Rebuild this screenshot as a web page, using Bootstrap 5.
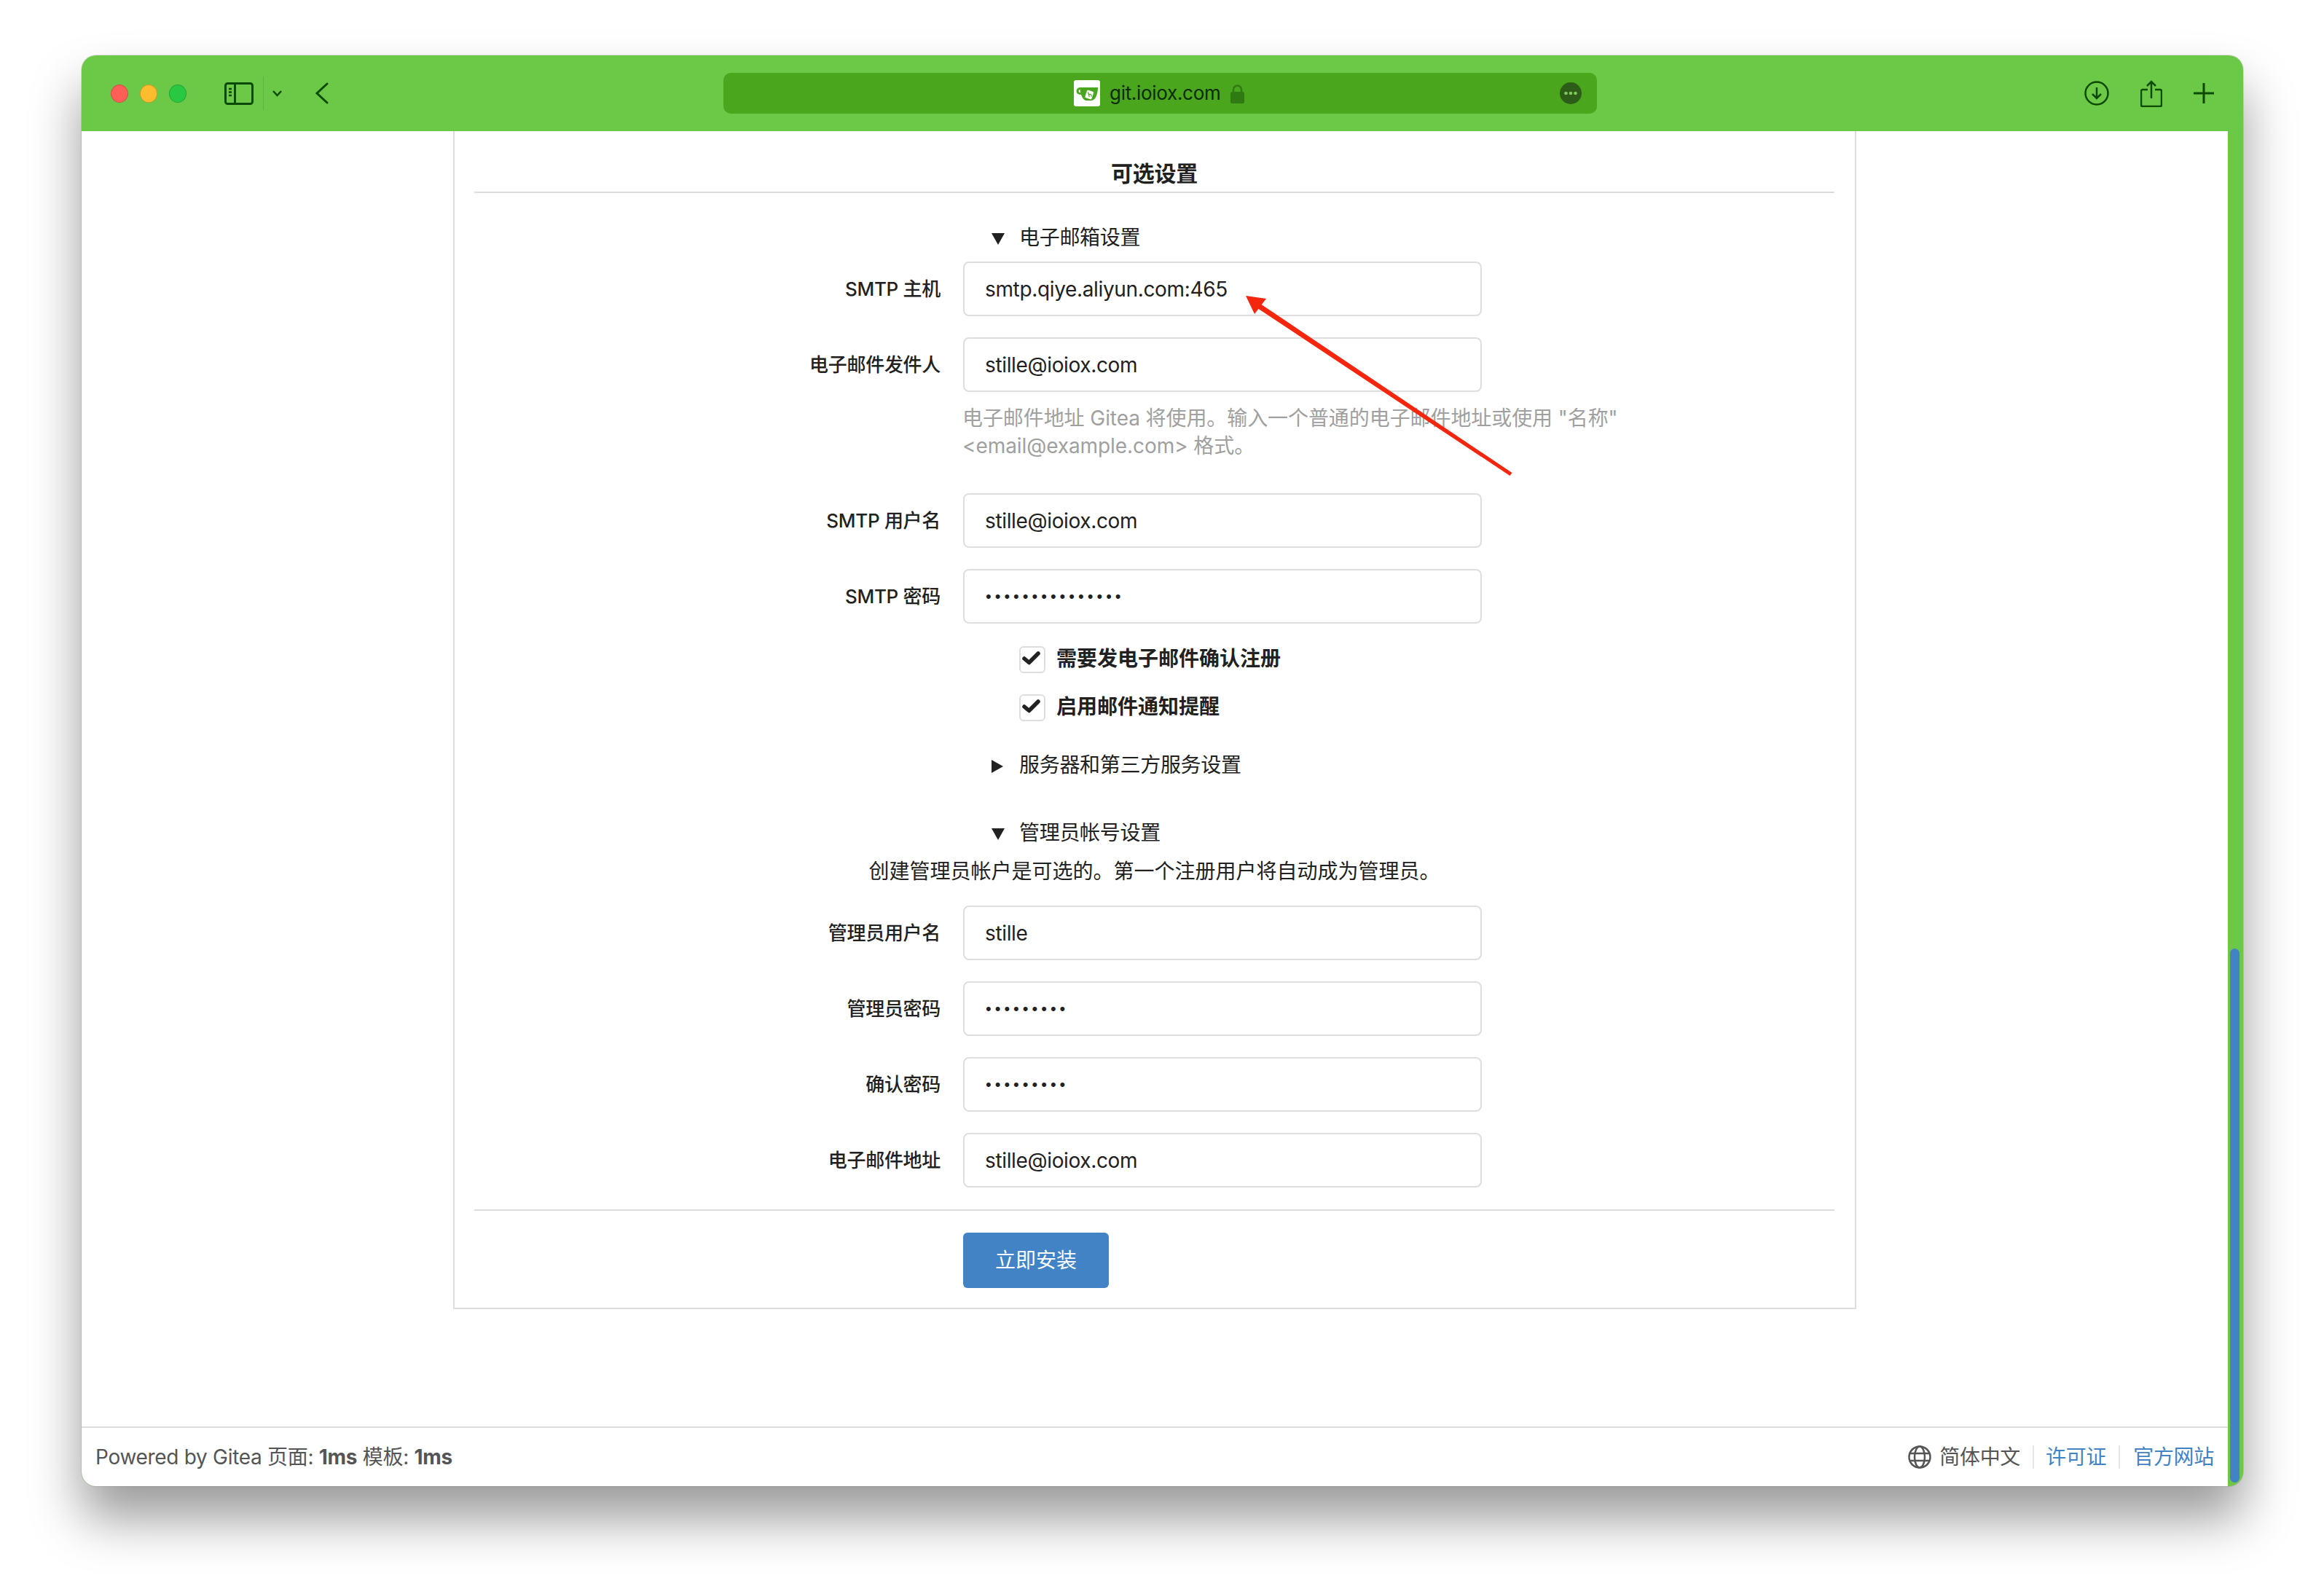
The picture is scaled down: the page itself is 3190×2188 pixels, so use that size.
<!DOCTYPE html>
<html lang="zh-CN">
<head>
    <meta charset="UTF-8">
    <title>Gitea 安装</title>
    <link href="https://cdn.jsdelivr.net/npm/bootstrap@5.3.2/dist/css/bootstrap.min.css" rel="stylesheet">
    <style>
        body { background: #fff; font-family: Inter, "Noto Sans CJK SC", sans-serif; font-size: 28px; line-height: 40px; letter-spacing: -.3px; color: #212121; }
        .page-wrap { padding: 76px 111px 148px 112px; }
        .app-window { height: 1964px; border-radius: 20px; background: #6cc947; box-shadow: 0 44px 70px rgba(0,0,0,.4), 0 0 0 1px rgba(0,0,0,.1); overflow: hidden; }

        /* safari toolbar */
        .toolbar { height: 104px; padding-left: 40px; padding-right: 40px; color: #0b4a00; }
        .dot { width: 24px; height: 25px; border-radius: 50%; border: 1px solid rgba(0,0,0,.18); margin-right: 16px; }
        .dot-red { background: #ff5f57; }
        .dot-yellow { background: #febc2e; }
        .dot-green { background: #28c840; margin-right: 0; }
        .tb-sidebar { margin-left: 52px; }
        .tb-sep { width: 1px; height: 46px; background: rgba(0,0,0,.1); margin: 0 12px 0 13px; }
        .tb-chev { margin-right: 45px; }
        .url-bar { position: absolute; left: 881px; top: 24px; width: 1199px; height: 56px; background: #4aa61c; border-radius: 10px; }
        .url-inner { padding-left: 481px; padding-right: 21px; }
        .url-text { font-size: 26px; line-height: 56px; color: #0c2b04; margin: 0 14px 0 13px; }
        .tb-right { gap: 43px; }

        /* page */
        .page-pane { background: #fff; min-height: 0; }
        .page-main { overflow: hidden; }
        .install-box { width: 1926px; height: 1617px; margin: 0 auto; padding: 0 28px 0 27px; border: 2px solid #ddd; border-top: 0; }
        .box-title { font-size: 30px; font-weight: 700; line-height: 40px; text-align: center; margin: 0; padding: 38px 0 5px; border-bottom: 2px solid #ddd; }
        .fold-head { list-style: none; cursor: pointer; margin-left: 710px; display: flex; align-items: center; line-height: 40px; }
        .fold-head::-webkit-details-marker { display: none; }
        .fold-arrow { width: 38px; flex: none; }
        .fold-mail { margin-top: 41px; }
        .fold-mail .fold-head { margin-bottom: 13px; }
        .fold-server { margin-top: 40px; }
        .fold-admin { margin-top: 53px; }
        .admin-note { text-align: center; margin: 13px 0 27px; line-height: 40px; letter-spacing: 0; }
        .field-row { display: flex; align-items: center; gap: 31px; margin-bottom: 29px; }
        .field-row label { width: 640px; text-align: right; font-size: 26px; font-weight: 500; line-height: 40px; margin: 0; color: #212121; }
        .field-input.form-control { width: 712px; height: 75px; padding: 0 28px; font-size: 28px; line-height: 40px; letter-spacing: -.35px; color: #212121; border: 2px solid #dedede; border-radius: 8px; box-shadow: none; }
        .field-input.form-control[type=password] { font-family: "Liberation Sans", sans-serif; font-size: 22px; letter-spacing: 5px; padding-left: 29px; }
        .field-hint { margin: -12px 0 46px 670px; width: 920px; font-size: 28px; line-height: 38px; letter-spacing: -.08px; color: #a0a0a0; }
        .check-row { display: flex; align-items: center; margin: 31px 0 0 748px; height: 37px; }
        .check-row + .check-row { margin-top: 29px; }
        .check-box.form-check-input { width: 36px; height: 37px; margin: 0 15px 0 0; border: 2px solid #dedede; border-radius: 6px; background-color: #fff; background-size: 36px 37px; }
        .check-box.form-check-input:checked { background-color: #fff; border-color: #dedede; background-image: url("data:image/svg+xml,%3csvg xmlns='http://www.w3.org/2000/svg' viewBox='0 0 36 37'%3e%3cpath fill='none' stroke='%23222' stroke-width='5.500' stroke-linecap='round' stroke-linejoin='round' d='M7 17l6.500 5.500L26 10'/%3e%3c/svg%3e"); }
        .check-row label { font-weight: 700; margin: -3px 0 0; letter-spacing: 0; }
        .form-end { margin-top: 30px; border-top: 2px solid #ddd; padding: 30px 0 0 671px; }
        .install-btn.btn { width: 200px; height: 76px; padding: 0; font-size: 28px; line-height: 40px; background: #4183c4; border: 0; border-radius: 6px; color: #fff; }

        /* footer */
        .page-foot { height: 82px; border-top: 2px solid #ddd; padding: 0 19px; color: #555; }
        .page-foot a { color: #4183c4; text-decoration: none; }
        .foot-links > * { padding: 0 17px 0 16px; border-left: 2px solid #e5e5e5; line-height: 32px; }
        .foot-links > *:first-child { border-left: 0; padding-left: 0; }
        .foot-links > *:last-child { padding: 0 0 0 18px; }
        .foot-links svg { margin-right: 11px; vertical-align: -6px; }

        /* scroll strip */
        .scroll-strip { width: 21px; padding: 1122px 5px 5px 3px; }
        .scroll-thumb { height: 733px; background: #4183c4; border-radius: 7px; }

        .arrow-layer { position: absolute; left: 0; top: 0; pointer-events: none; }
    </style>
</head>
<body>
    <div class="page-wrap">
        <div class="app-window d-flex flex-column position-relative">
            <div class="toolbar d-flex align-items-center flex-shrink-0">
                <span class="dot dot-red"></span>
                <span class="dot dot-yellow"></span>
                <span class="dot dot-green"></span>
                <svg class="tb-sidebar" width="40" height="31" viewBox="0 0 40 31" fill="none" stroke="currentColor" stroke-width="3">
                    <rect x="1.5" y="1.5" width="37" height="28" rx="3"/>
                    <path d="M14.5 1.5v28"/>
                    <path d="M6 9h4M6 13.500h4M6 18h4" stroke-width="2.500"/>
                </svg>
                <span class="tb-sep"></span>
                <svg class="tb-chev" width="13" height="9" viewBox="0 0 13 9" fill="none" stroke="currentColor" stroke-width="2.500"><path d="M1 1l5.500 6L12 1"/></svg>
                <svg width="19" height="30" viewBox="0 0 19 30" fill="none" stroke="currentColor" stroke-width="3" stroke-linecap="round"><path d="M17 2L3 15l14 13"/></svg>

                <div class="url-bar">
                    <div class="url-inner d-flex align-items-center h-100">
                        <svg width="36" height="36" viewBox="0 0 36 36">
                            <rect width="36" height="36" rx="3" fill="#fff"/>
                            <ellipse cx="9" cy="15" rx="5.500" ry="5" fill="#4aa61c"/>
                            <ellipse cx="9" cy="15" rx="2.500" ry="2.300" fill="#fff"/>
                            <path d="M8 10h25c0 8-3 18-9 18h-7c-5 0-8-9-9-18z" fill="#4aa61c"/>
                            <rect x="16.500" y="14.500" width="9.500" height="11" rx="1.500" fill="#fff" transform="rotate(18 21 20)"/>
                            <path d="M19.500 16.500l1.800 6.500m-.5-3.200c1.800-.8 2.800-.5 3.200 1l.5 1.800" fill="none" stroke="#4aa61c" stroke-width="1.200"/>
                        </svg>
                        <span class="url-text">git.ioiox.com</span>
                        <svg width="19" height="27" viewBox="0 0 19 27">
                            <path d="M4 12V8a5.500 5.500 0 0 1 11 0v4" fill="none" stroke="#2f7a12" stroke-width="2.500"/>
                            <rect y="11" width="19" height="16" rx="2.500" fill="#2f7a12"/>
                        </svg>
                        <svg class="ms-auto" width="30" height="30" viewBox="0 0 30 30">
                            <circle cx="15" cy="15" r="15" fill="#2c5c17"/>
                            <circle cx="8.500" cy="15" r="2.300" fill="#7fc860"/><circle cx="15" cy="15" r="2.300" fill="#7fc860"/><circle cx="21.500" cy="15" r="2.300" fill="#7fc860"/>
                        </svg>
                    </div>
                </div>

                <div class="tb-right d-flex align-items-center ms-auto">
                    <svg width="34" height="34" viewBox="0 0 34 34" fill="none" stroke="currentColor" stroke-width="2.500">
                        <circle cx="17" cy="17" r="15.500"/>
                        <path d="M17 9v15M11 18l6 6 6-6"/>
                    </svg>
                    <svg width="30" height="37" viewBox="0 0 30 37" fill="none" stroke="currentColor" stroke-width="2.500">
                        <path d="M10 13H3a2 2 0 0 0-2 2v19a2 2 0 0 0 2 2h24a2 2 0 0 0 2-2V15a2 2 0 0 0-2-2h-7"/>
                        <path d="M15 25V2M9 8l6-6 6 6"/>
                    </svg>
                    <svg width="28" height="28" viewBox="0 0 28 28" fill="none" stroke="currentColor" stroke-width="3"><path d="M14 0v28M0 14h28"/></svg>
                </div>
            </div>

            <div class="d-flex flex-grow-1 page-pane-row">
                <div class="page-pane flex-grow-1 d-flex flex-column">
                    <div class="page-main flex-grow-1">
                        <form class="install-box">
                            <h4 class="box-title">可选设置</h4>

                            <details class="fold-mail" open>
                                <summary class="fold-head">
                                    <span class="fold-arrow"><svg width="18" height="16" viewBox="0 0 18 16"><path d="M0 0h18L9 16z" fill="#212121"/></svg></span>
                                    电子邮箱设置
                                </summary>
                                <div class="field-row">
                                    <label for="smtpHost">SMTP 主机</label>
                                    <input id="smtpHost" class="form-control field-input" type="text" value="smtp.qiye.aliyun.com:465">
                                </div>
                                <div class="field-row">
                                    <label for="smtpFrom">电子邮件发件人</label>
                                    <input id="smtpFrom" class="form-control field-input" type="text" value="stille@ioiox.com">
                                </div>
                                <div class="field-hint">电子邮件地址 Gitea 将使用。输入一个普通的电子邮件地址或使用 "名称" &lt;email@example.com&gt; 格式。</div>
                                <div class="field-row">
                                    <label for="smtpUser">SMTP 用户名</label>
                                    <input id="smtpUser" class="form-control field-input" type="text" value="stille@ioiox.com">
                                </div>
                                <div class="field-row mb-0">
                                    <label for="smtpPass">SMTP 密码</label>
                                    <input id="smtpPass" class="form-control field-input" type="password" value="123456789012345">
                                </div>
                                <div class="check-row">
                                    <input id="regConfirm" class="form-check-input check-box" type="checkbox" checked>
                                    <label for="regConfirm">需要发电子邮件确认注册</label>
                                </div>
                                <div class="check-row">
                                    <input id="mailNotify" class="form-check-input check-box" type="checkbox" checked>
                                    <label for="mailNotify">启用邮件通知提醒</label>
                                </div>
                            </details>

                            <details class="fold-server">
                                <summary class="fold-head">
                                    <span class="fold-arrow"><svg width="16" height="18" viewBox="0 0 16 18"><path d="M0 0l16 9L0 18z" fill="#212121"/></svg></span>
                                    服务器和第三方服务设置
                                </summary>
                            </details>

                            <details class="fold-admin" open>
                                <summary class="fold-head">
                                    <span class="fold-arrow"><svg width="18" height="16" viewBox="0 0 18 16"><path d="M0 0h18L9 16z" fill="#212121"/></svg></span>
                                    管理员帐号设置
                                </summary>
                                <p class="admin-note">创建管理员帐户是可选的。第一个注册用户将自动成为管理员。</p>
                                <div class="field-row">
                                    <label for="adminName">管理员用户名</label>
                                    <input id="adminName" class="form-control field-input" type="text" value="stille">
                                </div>
                                <div class="field-row">
                                    <label for="adminPass">管理员密码</label>
                                    <input id="adminPass" class="form-control field-input" type="password" value="123456789">
                                </div>
                                <div class="field-row">
                                    <label for="adminConfirm">确认密码</label>
                                    <input id="adminConfirm" class="form-control field-input" type="password" value="123456789">
                                </div>
                                <div class="field-row mb-0">
                                    <label for="adminEmail">电子邮件地址</label>
                                    <input id="adminEmail" class="form-control field-input" type="text" value="stille@ioiox.com">
                                </div>
                            </details>

                            <div class="form-end">
                                <button type="button" class="btn btn-primary install-btn">立即安装</button>
                            </div>
                        </form>
                    </div>

                    <div class="page-foot d-flex align-items-center justify-content-between flex-shrink-0">
                        <div>Powered by Gitea 页面: <strong>1ms</strong> 模板: <strong>1ms</strong></div>
                        <div class="foot-links d-flex align-items-center">
                            <span><svg width="32" height="32" viewBox="0 0 32 32" fill="none" stroke="#555" stroke-width="2.500">
                                <circle cx="16" cy="16" r="14.500"/>
                                <ellipse cx="16" cy="16" rx="7" ry="14.500"/>
                                <path d="M2 11h28M2 21h28"/>
                            </svg>简体中文</span>
                            <a href="#">许可证</a>
                            <a href="#">官方网站</a>
                        </div>
                    </div>
                </div>
                <div class="scroll-strip flex-shrink-0"><div class="scroll-thumb"></div></div>
            </div>
        </div>
    </div>

    <!-- red annotation arrow drawn over the form -->
    <svg class="arrow-layer" width="3190" height="2188" viewBox="0 0 3190 2188">
        <path d="M1710 406l28 4-16 21z" fill="#f5260e"/>
        <path d="M1726 423l4-6 345.500 232-3 4z" fill="#f5260e"/>
    </svg>

    <script src="https://cdn.jsdelivr.net/npm/bootstrap@5.3.2/dist/js/bootstrap.bundle.min.js"></script>
</body>
</html>
